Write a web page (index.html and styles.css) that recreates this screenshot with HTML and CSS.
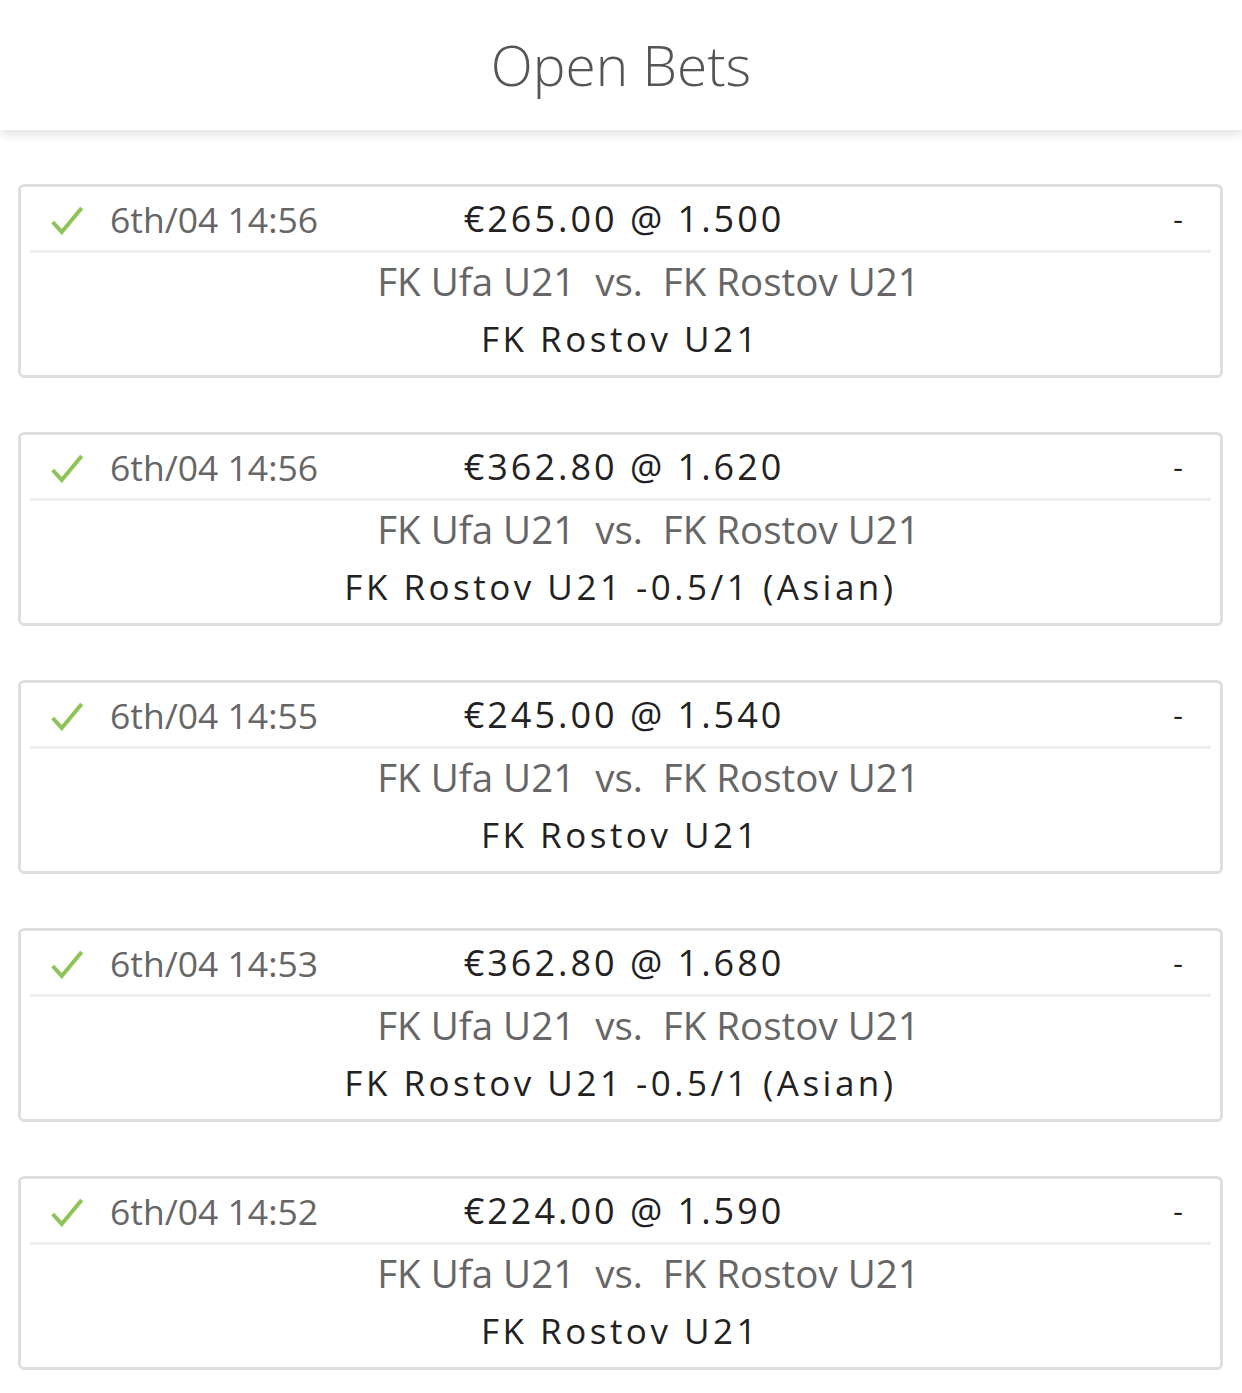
FILE: index.html
```html
<!DOCTYPE html>
<html lang="en">
<head>
    <meta charset="UTF-8">
    <meta name="viewport" content="width=device-width, initial-scale=1.0">
    <title>Open Bets</title>
    <link rel="stylesheet" href="styles.css">
</head>
<body>

    <div class="header">
        <h1>Open Bets</h1>
    </div>

    <div class="bets">
        <div class="bet">
            <div class="bet-top">
                <div class="bet-time">
                    <svg class="check" width="34" height="30" viewBox="0 0 34 30"><path d="M2.7 17 L11.7 27 L31.7 3" fill="none" stroke="#8dc454" stroke-width="4"/></svg>
                    <span>6th/04 14:56</span>
                </div>
                <div class="bet-stake">€265.00 @ 1.500</div>
                <div class="bet-result">-</div>
            </div>
            <div class="bet-event">FK Ufa U21&nbsp; vs.&nbsp; FK Rostov U21</div>
            <div class="bet-pick">FK Rostov U21</div>
        </div>

        <div class="bet">
            <div class="bet-top">
                <div class="bet-time">
                    <svg class="check" width="34" height="30" viewBox="0 0 34 30"><path d="M2.7 17 L11.7 27 L31.7 3" fill="none" stroke="#8dc454" stroke-width="4"/></svg>
                    <span>6th/04 14:56</span>
                </div>
                <div class="bet-stake">€362.80 @ 1.620</div>
                <div class="bet-result">-</div>
            </div>
            <div class="bet-event">FK Ufa U21&nbsp; vs.&nbsp; FK Rostov U21</div>
            <div class="bet-pick">FK Rostov U21 -0.5/1 (Asian)</div>
        </div>

        <div class="bet">
            <div class="bet-top">
                <div class="bet-time">
                    <svg class="check" width="34" height="30" viewBox="0 0 34 30"><path d="M2.7 17 L11.7 27 L31.7 3" fill="none" stroke="#8dc454" stroke-width="4"/></svg>
                    <span>6th/04 14:55</span>
                </div>
                <div class="bet-stake">€245.00 @ 1.540</div>
                <div class="bet-result">-</div>
            </div>
            <div class="bet-event">FK Ufa U21&nbsp; vs.&nbsp; FK Rostov U21</div>
            <div class="bet-pick">FK Rostov U21</div>
        </div>

        <div class="bet">
            <div class="bet-top">
                <div class="bet-time">
                    <svg class="check" width="34" height="30" viewBox="0 0 34 30"><path d="M2.7 17 L11.7 27 L31.7 3" fill="none" stroke="#8dc454" stroke-width="4"/></svg>
                    <span>6th/04 14:53</span>
                </div>
                <div class="bet-stake">€362.80 @ 1.680</div>
                <div class="bet-result">-</div>
            </div>
            <div class="bet-event">FK Ufa U21&nbsp; vs.&nbsp; FK Rostov U21</div>
            <div class="bet-pick">FK Rostov U21 -0.5/1 (Asian)</div>
        </div>

        <div class="bet">
            <div class="bet-top">
                <div class="bet-time">
                    <svg class="check" width="34" height="30" viewBox="0 0 34 30"><path d="M2.7 17 L11.7 27 L31.7 3" fill="none" stroke="#8dc454" stroke-width="4"/></svg>
                    <span>6th/04 14:52</span>
                </div>
                <div class="bet-stake">€224.00 @ 1.590</div>
                <div class="bet-result">-</div>
            </div>
            <div class="bet-event">FK Ufa U21&nbsp; vs.&nbsp; FK Rostov U21</div>
            <div class="bet-pick">FK Rostov U21</div>
        </div>
    </div>

</body>
</html>
```

FILE: styles.css
```css
body {
    font-family: "Open Sans", Arial, sans-serif;
    margin: 0;
    padding: 0;
    background-color: #ffffff;
}

.header {
    height: 130px;
    background-color: #ffffff;
    box-shadow: 0 4px 10px rgba(0, 0, 0, 0.13);
    display: flex;
    align-items: center;
    justify-content: center;
    position: relative;
}

.header h1 {
    margin: 0;
    font-size: 55px;
    font-weight: 300;
    color: #555;
    padding-bottom: 2px;
}

.bets {
    padding: 54px 19px 20px 18px;
    display: flex;
    flex-direction: column;
    gap: 54px;
}

.bet {
    border: 3px solid #dedede;
    border-radius: 6px;
    padding: 0 9px 8px;
    text-align: center;
}

.bet-top {
    display: grid;
    grid-template-columns: 1fr auto 1fr;
    align-items: center;
    height: 63px;
    border-bottom: 3px solid #eeeeee;
    padding: 0 28px 0 20px;
}

.bet-time {
    display: flex;
    align-items: center;
    gap: 26px;
    font-size: 35.5px;
    color: #666;
}

.check {
    margin-top: 2px;
}

.bet-stake {
    font-size: 36px;
    font-weight: 500;
    color: #222;
    letter-spacing: 3px;
    padding-left: 15px;
}

.bet-result {
    text-align: right;
    font-size: 30px;
    color: #222;
}

.bet-event {
    line-height: 57px;
    font-size: 38.5px;
    color: #666;
    padding-left: 56px;
}

.bet-pick {
    line-height: 57px;
    font-size: 35px;
    font-weight: 500;
    color: #222;
    letter-spacing: 3.5px;
}
```
